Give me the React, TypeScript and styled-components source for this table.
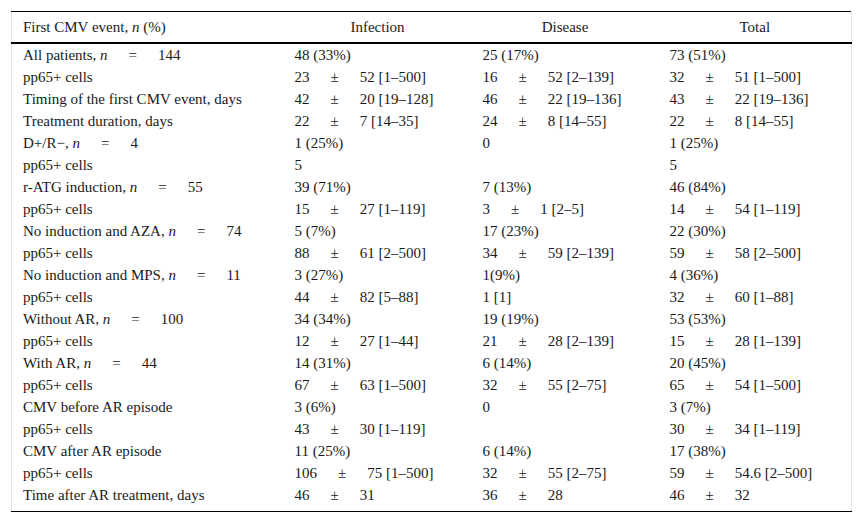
import React from 'react';
import styled, { createGlobalStyle } from 'styled-components';

const GlobalStyle = createGlobalStyle`
  html, body {
    margin: 0;
    padding: 0;
    background: #ffffff;
  }
  body {
    font-family: "Liberation Serif", "Times New Roman", serif;
    color: #1a1a1a;
  }
`;

// Styled Components
const Page = styled.div`
  padding: 11px 10px 11px 11px;
`;

const Table = styled.table`
  width: 840px;
  table-layout: fixed;
  border-collapse: collapse;
  border-top: 1px solid #000;
  border-bottom: 1px solid #000;
  border-left: 1px solid #e6e6e6;
  border-right: 1px solid #e6e6e6;
  font-size: 15px;
  color: #1a1a1a;
`;

const HeadCell = styled.th<{ $align?: 'left' | 'center' }>`
  text-align: ${({ $align }) => $align || 'center'};
  font-weight: normal;
  padding: 0 11px;
  height: 30px;
  line-height: 30px;
  border-bottom: 2px solid #000;
  white-space: nowrap;
`;

const BodyCell = styled.td`
  padding: 0 11px;
  height: 22px;
  line-height: 22px;
  white-space: nowrap;
  vertical-align: top;
  overflow: hidden;
`;

const BodyRow = styled.tr`
  &:last-child ${BodyCell} {
    padding-bottom: 5px;
  }
`;

const Op = styled.span<{ $gap: number }>`
  display: inline-block;
  padding: 0 ${({ $gap }) => $gap}px;
`;

type Cell = React.ReactNode;

interface RowData {
  label: Cell;
  infection: Cell;
  disease: Cell;
  total: Cell;
}

const N = () => <i>n</i>;

const count = (text: string, value: string | number) => (
  <>
    {text}, <N />
    <Op $gap={21}>=</Op>
    {value}
  </>
);

// mean ± sd [range]
const pm = (mean: string | number, rest: string) => (
  <>
    {mean}
    <Op $gap={21}>±</Op>
    {rest}
  </>
);

const rows: RowData[] = [
  { label: count('All patients', 144), infection: '48 (33%)', disease: '25 (17%)', total: '73 (51%)' },
  { label: 'pp65+ cells', infection: pm(23, '52 [1–500]'), disease: pm(16, '52 [2–139]'), total: pm(32, '51 [1–500]') },
  { label: 'Timing of the first CMV event, days', infection: pm(42, '20 [19–128]'), disease: pm(46, '22 [19–136]'), total: pm(43, '22 [19–136]') },
  { label: 'Treatment duration, days', infection: pm(22, '7 [14–35]'), disease: pm(24, '8 [14–55]'), total: pm(22, '8 [14–55]') },
  { label: count('D+/R−', 4), infection: '1 (25%)', disease: '0', total: '1 (25%)' },
  { label: 'pp65+ cells', infection: '5', disease: '', total: '5' },
  { label: count('r-ATG induction', 55), infection: '39 (71%)', disease: '7 (13%)', total: '46 (84%)' },
  { label: 'pp65+ cells', infection: pm(15, '27 [1–119]'), disease: pm(3, '1 [2–5]'), total: pm(14, '54 [1–119]') },
  { label: count('No induction and AZA', 74), infection: '5 (7%)', disease: '17 (23%)', total: '22 (30%)' },
  { label: 'pp65+ cells', infection: pm(88, '61 [2–500]'), disease: pm(34, '59 [2–139]'), total: pm(59, '58 [2–500]') },
  { label: count('No induction and MPS', 11), infection: '3 (27%)', disease: '1(9%)', total: '4 (36%)' },
  { label: 'pp65+ cells', infection: pm(44, '82 [5–88]'), disease: '1 [1]', total: pm(32, '60 [1–88]') },
  { label: count('Without AR', 100), infection: '34 (34%)', disease: '19 (19%)', total: '53 (53%)' },
  { label: 'pp65+ cells', infection: pm(12, '27 [1–44]'), disease: pm(21, '28 [2–139]'), total: pm(15, '28 [1–139]') },
  { label: count('With AR', 44), infection: '14 (31%)', disease: '6 (14%)', total: '20 (45%)' },
  { label: 'pp65+ cells', infection: pm(67, '63 [1–500]'), disease: pm(32, '55 [2–75]'), total: pm(65, '54 [1–500]') },
  { label: 'CMV before AR episode', infection: '3 (6%)', disease: '0', total: '3 (7%)' },
  { label: 'pp65+ cells', infection: pm(43, '30 [1–119]'), disease: '', total: pm(30, '34 [1–119]') },
  { label: 'CMV after AR episode', infection: '11 (25%)', disease: '6 (14%)', total: '17 (38%)' },
  { label: 'pp65+ cells', infection: pm(106, '75 [1–500]'), disease: pm(32, '55 [2–75]'), total: pm(59, '54.6 [2–500]') },
  { label: 'Time after AR treatment, days', infection: pm(46, '31'), disease: pm(36, '28'), total: pm(46, '32') },
];

const App: React.FC = () => {
  return (
    <>
      <GlobalStyle />
      <Page>
        <Table>
          <colgroup>
            <col style={{ width: 272 }} />
            <col style={{ width: 188 }} />
            <col style={{ width: 187 }} />
            <col style={{ width: 193 }} />
          </colgroup>
          <thead>
            <tr>
              <HeadCell $align="left">
                First CMV event, <N /> (%)
              </HeadCell>
              <HeadCell>Infection</HeadCell>
              <HeadCell>Disease</HeadCell>
              <HeadCell>Total</HeadCell>
            </tr>
          </thead>
          <tbody>
            {rows.map((row, i) => (
              <BodyRow key={i}>
                <BodyCell>{row.label}</BodyCell>
                <BodyCell>{row.infection}</BodyCell>
                <BodyCell>{row.disease}</BodyCell>
                <BodyCell>{row.total}</BodyCell>
              </BodyRow>
            ))}
          </tbody>
        </Table>
      </Page>
    </>
  );
};

export default App;
